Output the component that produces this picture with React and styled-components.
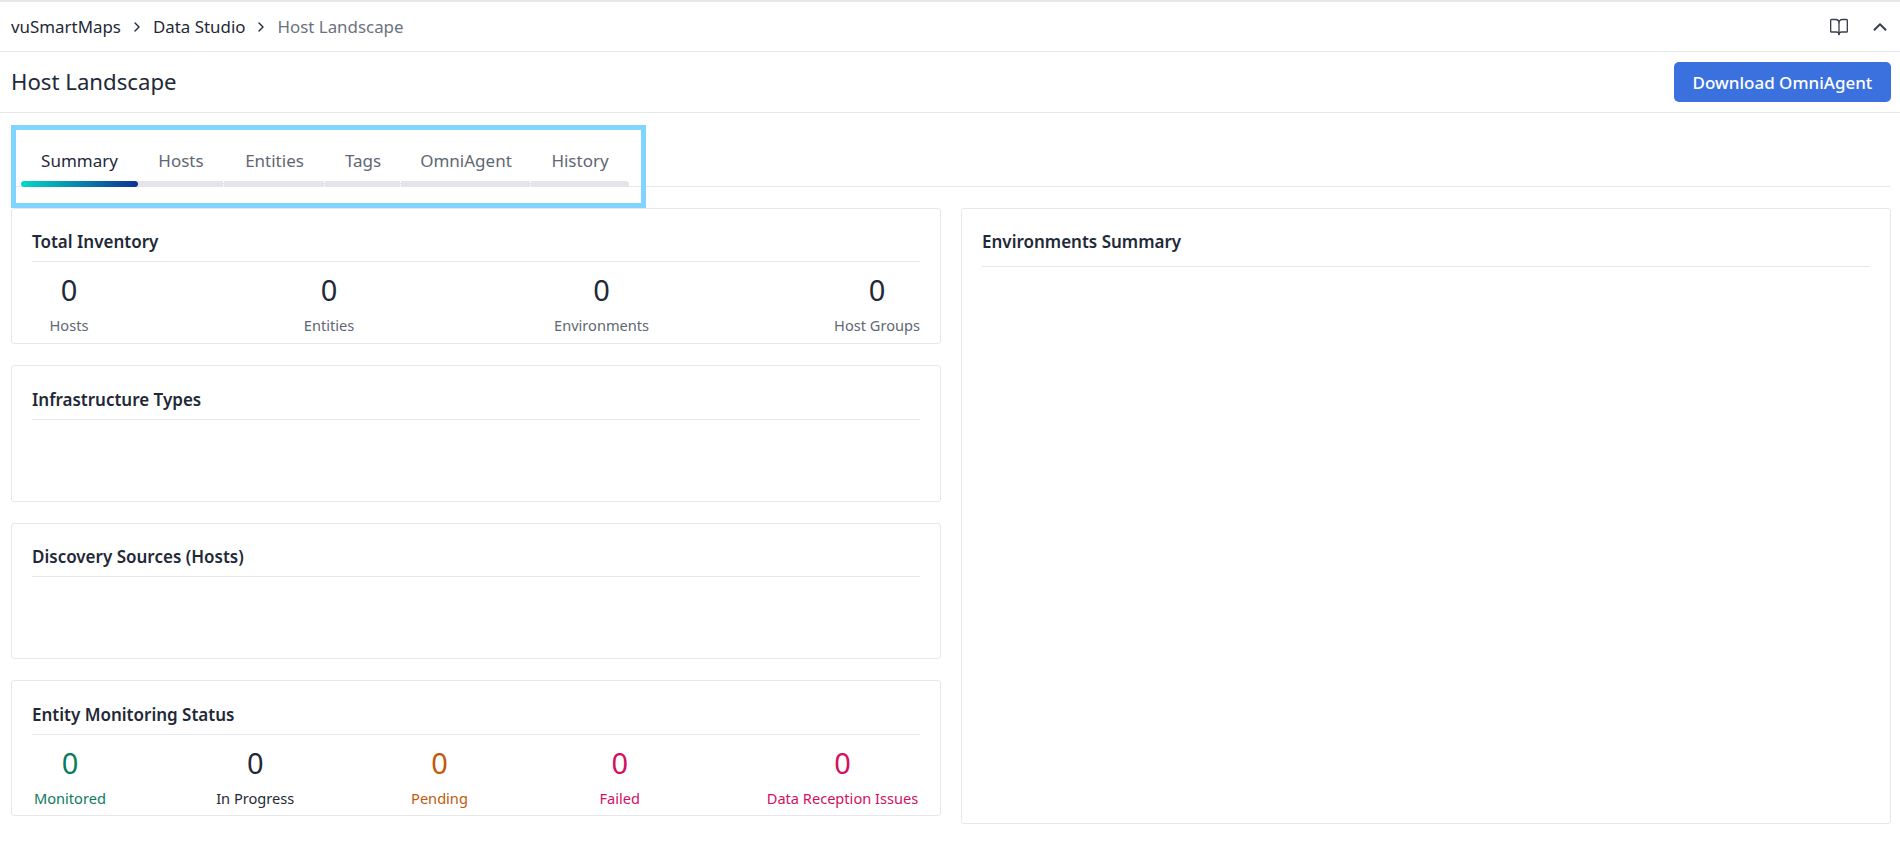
import React from "react"
import styled, { createGlobalStyle } from "styled-components"
import { BookOpen, ChevronRight, ChevronUp } from "lucide-react"

const GlobalStyle = createGlobalStyle`
    * { box-sizing: border-box; }
    body {
        margin: 0;
        background: #fff;
        color: #1f2937;
        font-family: "Noto Sans", "Liberation Sans", sans-serif;
    }
`

const Page = styled.div`
    width: 1900px;
    height: 850px;
    overflow: hidden;
    border-top: 2px solid #e5e7eb;
`

const Breadcrumbs = styled.div`
    height: 50px;
    padding: 0 9px 0 11px;
    display: flex;
    align-items: center;
    border-bottom: 1px solid #e5e7eb;
    font-size: 16.9px;
`

const Crumb = styled.span`
    color: ${p => p.$current ? "#6b7280" : "#1f2937"};
`

const Separator = styled(ChevronRight)`
    width: 16px;
    height: 16px;
    margin: 0 8px;
    color: #1f2937;
`

const IconRow = styled.div`
    margin-left: auto;
    display: flex;
    align-items: center;
    gap: 20px;
    color: #374151;
`

const TitleBar = styled.div`
    height: 61px;
    padding: 0 9px 0 11px;
    display: flex;
    align-items: center;
    justify-content: space-between;
    border-bottom: 1px solid #e5e7eb;
`

const PageTitle = styled.h1`
    margin: 0 0 2px;
    font-size: 22.2px;
    font-weight: 400;
`

const DownloadButton = styled.button`
    width: 217px;
    height: 40px;
    border: none;
    border-radius: 5px;
    background: #3b71de;
    color: #fff;
    font: 500 17px "Noto Sans", sans-serif;
`

const TabBar = styled.div`
    height: 74px;
    margin: 0 10px 0 11px;
    border-bottom: 1px solid #e5e7eb;
`

const TabList = styled.div`
    width: 625px;
    height: 73px;
    margin-left: 5px;
    position: relative;
    top: 17px;
    padding: 0 5px;
    display: flex;
    outline: 5px solid #80d4ff;
`

const Tab = styled.div`
    flex: none;
    width: ${p => p.$width}px;
    height: 57px;
    display: flex;
    flex-direction: column;
    align-items: center;
    color: ${p => p.$active ? "#1f2937" : "#5f6772"};
    font-size: 17px;
    white-space: nowrap;
`

const TabLabel = styled.span`
    margin-top: 19px;
    line-height: 24px;
`

const TabTrack = styled.div`
    width: 100%;
    height: 6px;
    margin-top: auto;
    background: ${p => p.$active ? "linear-gradient(90deg, #04d9c4, #0d2f96)" : "#e4e5e8"};
    border-radius: ${p => p.$active ? "3px" : p.$last ? "0 3px 3px 0" : "0"};
    border-right: ${p => p.$active || p.$last ? "none" : "1px dotted #fff"};
`

const Content = styled.div`
    display: grid;
    grid-template-columns: 930px 930px;
    column-gap: 20px;
    padding: 21px 0 0 11px;
`

const LeftColumn = styled.div`
    display: flex;
    flex-direction: column;
    gap: 21px;
`

const Card = styled.section`
    height: ${p => p.$height}px;
    padding: 0 20px;
    border: 1px solid #e5e7eb;
    border-radius: 3px;
    background: #fff;
`

const CardHeader = styled.div`
    height: ${p => p.$height || 53}px;
    display: flex;
    align-items: flex-end;
    padding-bottom: ${p => p.$gap || 7}px;
    border-bottom: 1px solid #e5e7eb;
`

const CardTitle = styled.h2`
    margin: 0;
    font-size: 17px;
    line-height: 24px;
    font-weight: 600;
    color: #1f2937;
`

const StatRow = styled.div`
    display: flex;
    justify-content: space-between;
    padding: 10px 0 0 2px;
`

const Stat = styled.div`
    min-width: ${p => p.$min || 70}px;
    display: flex;
    flex-direction: column;
    align-items: center;
    color: ${p => p.$color || "#1f2937"};
`

const StatValue = styled.div`
    font-size: 29px;
    line-height: 36px;
`

const StatLabel = styled.div`
    margin-top: 7px;
    font-size: 14.6px;
    line-height: 20px;
    white-space: nowrap;
    color: ${p => p.$color || "#5f6772"};
`

const tabs = [
    ["Summary", 117],
    ["Hosts", 86],
    ["Entities", 101],
    ["Tags", 76],
    ["OmniAgent", 130],
    ["History", 98],
]

const inventory = [
    ["Hosts", 70],
    ["Entities", 80],
    ["Environments", 70],
    ["Host Groups", 70],
]

const monitoring = [
    ["Monitored", "#0b7a5c", 70],
    ["In Progress", "#1f2937", 70],
    ["Pending", "#c2590c", 70],
    ["Failed", "#d3105f", 70],
    ["Data Reception Issues", "#d3105f", 155],
]

const App = () =>
    <Page>
        <GlobalStyle/>
        <Breadcrumbs>
            <Crumb>vuSmartMaps</Crumb>
            <Separator/>
            <Crumb>Data Studio</Crumb>
            <Separator/>
            <Crumb $current>Host Landscape</Crumb>
            <IconRow>
                <BookOpen size={20} strokeWidth={1.6}/>
                <ChevronUp size={22} strokeWidth={2.2}/>
            </IconRow>
        </Breadcrumbs>

        <TitleBar>
            <PageTitle>Host Landscape</PageTitle>
            <DownloadButton>Download OmniAgent</DownloadButton>
        </TitleBar>

        <TabBar>
            <TabList>
                {tabs.map(([label, width], i) =>
                    <Tab key={label} $width={width} $active={i === 0}>
                        <TabLabel>{label}</TabLabel>
                        <TabTrack $active={i === 0} $last={i === tabs.length - 1}/>
                    </Tab>
                )}
            </TabList>
        </TabBar>

        <Content>
            <LeftColumn>
                <Card $height={136.33}>
                    <CardHeader><CardTitle>Total Inventory</CardTitle></CardHeader>
                    <StatRow>
                        {inventory.map(([label, min]) =>
                            <Stat key={label} $min={min}>
                                <StatValue>0</StatValue>
                                <StatLabel>{label}</StatLabel>
                            </Stat>
                        )}
                    </StatRow>
                </Card>
                <Card $height={136.33}>
                    <CardHeader $height={54}><CardTitle>Infrastructure Types</CardTitle></CardHeader>
                </Card>
                <Card $height={136.33}>
                    <CardHeader><CardTitle>Discovery Sources (Hosts)</CardTitle></CardHeader>
                </Card>
                <Card $height={136.33}>
                    <CardHeader $height={54}><CardTitle>Entity Monitoring Status</CardTitle></CardHeader>
                    <StatRow>
                        {monitoring.map(([label, color, min]) =>
                            <Stat key={label} $color={color} $min={min}>
                                <StatValue>0</StatValue>
                                <StatLabel $color={color}>{label}</StatLabel>
                            </Stat>
                        )}
                    </StatRow>
                </Card>
            </LeftColumn>
            <Card $height={616}>
                <CardHeader $height={58} $gap={12}><CardTitle>Environments Summary</CardTitle></CardHeader>
            </Card>
        </Content>
    </Page>

export default App
